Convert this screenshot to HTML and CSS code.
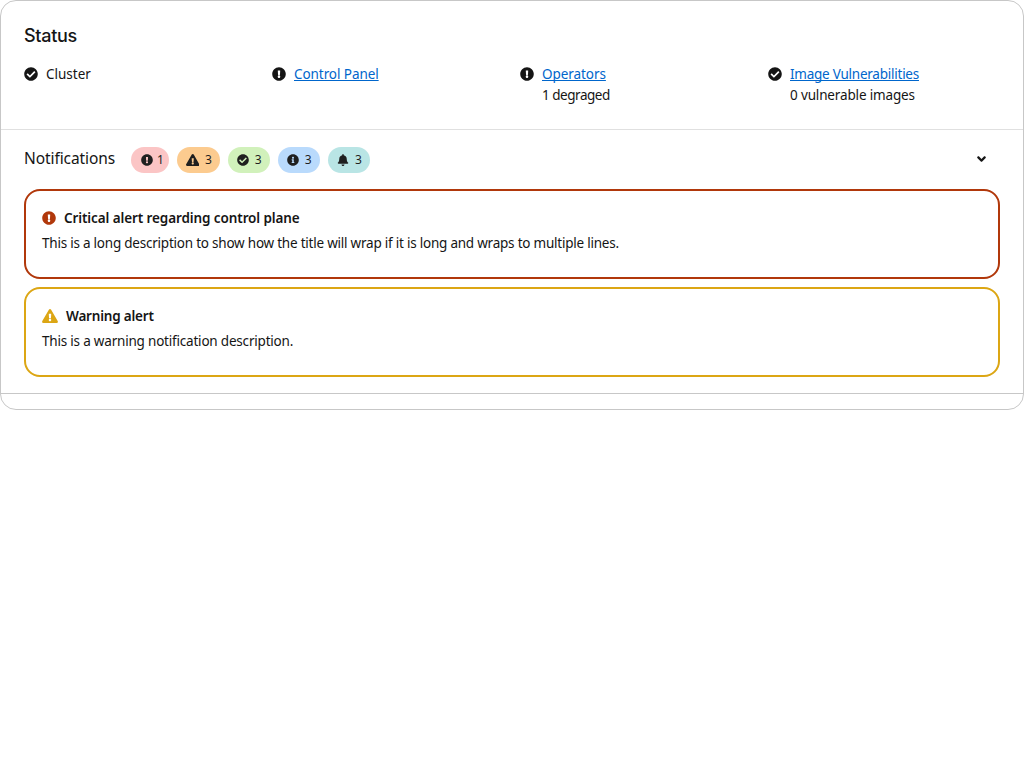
FILE: index.html
```html
<!DOCTYPE html>
<html lang="en">
<head>
<meta charset="utf-8">
<title>Status</title>
<link rel="stylesheet" href="styles.css">
</head>
<body>
<svg class="sprite" aria-hidden="true">
  <symbol id="check" viewBox="0 0 512 512"><path d="M504 256c0 136.967-111.033 248-248 248S8 392.967 8 256 119.033 8 256 8s248 111.033 248 248zM227.314 387.314l184-184c6.248-6.248 6.248-16.379 0-22.627l-22.627-22.627c-6.248-6.249-16.379-6.249-22.628 0L216 308.118l-70.059-70.059c-6.248-6.248-16.379-6.248-22.628 0l-22.627 22.627c-6.248 6.248-6.248 16.379 0 22.627l104 104c6.249 6.249 16.379 6.249 22.628.001z"/></symbol>
  <symbol id="exclamation" viewBox="0 0 512 512"><path d="M504 256c0 136.997-111.043 248-248 248S8 392.997 8 256C8 119.083 119.043 8 256 8s248 111.083 248 248zm-248 50c-25.405 0-46 20.595-46 46s20.595 46 46 46 46-20.595 46-46-20.595-46-46-46zm-43.673-165.346l7.418 136c.347 6.364 5.609 11.346 11.982 11.346h48.546c6.373 0 11.635-4.982 11.982-11.346l7.418-136c.375-6.874-5.098-12.654-11.982-12.654h-63.383c-6.884 0-12.356 5.78-11.981 12.654z"/></symbol>
  <symbol id="triangle" viewBox="0 0 576 512"><path d="M569.517 440.013C587.975 472.007 564.806 512 527.94 512H48.054c-36.937 0-59.999-40.055-41.577-71.987L246.423 23.985c18.467-32.009 64.72-31.951 83.154 0l239.94 416.028zM288 354c-25.405 0-46 20.595-46 46s20.595 46 46 46 46-20.595 46-46-20.595-46-46-46zm-43.673-165.346l7.418 136c.347 6.364 5.609 11.346 11.982 11.346h48.546c6.373 0 11.635-4.982 11.982-11.346l7.418-136c.375-6.874-5.098-12.654-11.982-12.654h-63.383c-6.884 0-12.356 5.78-11.981 12.654z"/></symbol>
  <symbol id="info" viewBox="0 0 512 512"><path d="M256 8C119.043 8 8 119.083 8 256c0 136.997 111.043 248 248 248s248-111.003 248-248C504 119.083 392.957 8 256 8zm0 110c23.196 0 42 18.804 42 42s-18.804 42-42 42-42-18.804-42-42 18.804-42 42-42zm56 254c0 6.627-5.373 12-12 12h-88c-6.627 0-12-5.373-12-12v-24c0-6.627 5.373-12 12-12h12v-64h-12c-6.627 0-12-5.373-12-12v-24c0-6.627 5.373-12 12-12h64c6.627 0 12 5.373 12 12v100h12c6.627 0 12 5.373 12 12v24z"/></symbol>
  <symbol id="bell" viewBox="0 0 448 512"><path d="M224 512c35.32 0 63.97-28.65 63.97-64H160.03c0 35.35 28.65 64 63.97 64zm215.39-149.71c-19.32-20.76-55.47-51.99-55.47-154.29 0-77.7-54.48-139.9-127.94-155.16V32c0-17.67-14.32-32-31.98-32s-31.98 14.33-31.98 32v20.84C118.56 68.1 64.08 130.3 64.08 208c0 102.3-36.15 133.53-55.47 154.29-6 6.45-8.66 14.16-8.61 21.71.11 16.4 12.98 32 32.1 32h383.8c19.12 0 32-15.6 32.1-32 .05-7.55-2.61-15.27-8.61-21.71z"/></symbol>
  <symbol id="angle" viewBox="0 0 320 512"><path d="M143 352.3L7 216.3c-9.4-9.4-9.4-24.6 0-33.9l22.6-22.6c9.4-9.4 24.6-9.4 33.9 0l96.4 96.4 96.4-96.4c9.4-9.4 24.6-9.4 33.9 0l22.6 22.6c9.4 9.4 9.4 24.6 0 33.9l-136 136c-9.2 9.4-24.4 9.4-33.8 0z"/></symbol>
</svg>
<main class="card">
  <section class="status">
    <h2 class="status-title"><span class="t-status">Status</span></h2>
    <div class="status-grid">
      <div class="status-item"><svg class="icon"><use href="#check"/></svg><div class="status-text"><span class="t-cluster">Cluster</span></div></div>
      <div class="status-item"><svg class="icon"><use href="#exclamation"/></svg><div class="status-text"><a class="t-control" href="#">Control Panel</a></div></div>
      <div class="status-item"><svg class="icon"><use href="#exclamation"/></svg><div class="status-text"><a class="t-operators" href="#">Operators</a><br><span class="t-degraged">1 degraged</span></div></div>
      <div class="status-item"><svg class="icon"><use href="#check"/></svg><div class="status-text"><a class="t-image" href="#">Image Vulnerabilities</a><br><span class="t-vulnerable">0 vulnerable images</span></div></div>
    </div>
  </section>
  <section class="notifications">
    <header class="notif-header">
      <span class="notif-title">Notifications</span>
      <div class="labels">
        <span class="label red"><svg class="icon-sm"><use href="#exclamation"/></svg><span class="one">1</span></span>
        <span class="label orange"><svg class="icon-sm wide"><use href="#triangle"/></svg>3</span>
        <span class="label green"><svg class="icon-sm"><use href="#check"/></svg>3</span>
        <span class="label blue"><svg class="icon-sm"><use href="#info"/></svg>3</span>
        <span class="label teal"><svg class="icon-sm"><use href="#bell"/></svg>3</span>
      </div>
      <svg class="toggle"><use href="#angle"/></svg>
    </header>
    <div class="alerts">
      <article class="alert danger">
        <h3 class="alert-title"><svg class="icon"><use href="#exclamation"/></svg><span class="t-critical">Critical alert regarding control plane</span></h3>
        <p class="alert-text t-long">This is a long description to show how the title will wrap if it is long and wraps to multiple lines.</p>
      </article>
      <article class="alert warning">
        <h3 class="alert-title"><svg class="icon icon-wide"><use href="#triangle"/></svg><span class="t-warning">Warning alert</span></h3>
        <p class="alert-text t-short">This is a warning notification description.</p>
      </article>
    </div>
  </section>
</main>
</body>
</html>
```

FILE: styles.css
```css
* { box-sizing: border-box; }
body {
  margin: 0;
  background: #fff;
  color: #151515;
  font-family: "Noto Sans", "Open Sans", sans-serif;
  font-size: 13.5px;
  line-height: 21px;
}
.sprite { display: none; }
.card {
  height: 410px;
  border: 1px solid #c7c7c7;
  border-radius: 16px;
  white-space: nowrap;
}
.status { height: 129px; padding: 23px 23px 0; border-bottom: 1px solid #e0e0e0; }
.status-title { margin: 0 0 16px; font-family: Inter, sans-serif; font-size: 18px; line-height: 23px; font-weight: 500; }
.status-grid { display: grid; grid-template-columns: repeat(4, 1fr); gap: 16px; }
.status-item { display: flex; gap: 8px; }
.status-text { padding-top: 1px; }
.icon { display: block; flex: none; width: 14px; height: 14px; margin-top: 3.5px; fill: currentColor; }
.icon-wide { width: 16px; }
a { color: #0066cc; text-decoration: underline; text-underline-offset: 1px; text-decoration-thickness: 1px; text-decoration-skip-ink: none; }

.t-status { letter-spacing: -0.3px; }
.t-control { letter-spacing: -0.07px; }
.t-operators { letter-spacing: -0.06px; }
.t-degraged { letter-spacing: -0.48px; }
.t-image { letter-spacing: -0.24px; }
.t-vulnerable { letter-spacing: -0.15px; }
.t-critical { letter-spacing: -0.1px; }
.t-warning { letter-spacing: -0.2px; }
.t-long { letter-spacing: -0.225px; }
.t-short { letter-spacing: -0.2px; }

.notifications { height: 264px; padding: 17px 23px 0; border-bottom: 1px solid #c7c7c7; }
.notif-header { display: flex; height: 26px; }
.notif-title { width: 107px; font-size: 15.5px; line-height: 23px; letter-spacing: -0.08px; }
.labels { display: flex; gap: 8px; }
.label {
  display: flex;
  align-items: center;
  gap: 5.7px;
  width: 42.15px;
  height: 26px;
  padding-left: 9.5px;
  border-radius: 13px;
  color: #1f1f1f;
  font-size: 12px;
  line-height: 18px;
}
.icon-sm { width: 12px; height: 12px; flex: none; fill: #1f1f1f; }
.wide { width: 13.5px; }
.red { width: 38.4px; gap: 4.5px; background: #fbc5c5; }
.orange { background: #fccb8f; padding-left: 8.5px; }
.green { background: #d1f1bb; }
.blue { background: #b9dafc; }
.teal { background: #b9e5e5; }
.toggle { width: 9px; height: 14px; margin: 5px 14px 0 auto; fill: currentColor; }

.alerts { display: grid; gap: 8px; margin-top: 16px; }
.alert { height: 90px; padding: 16px; border: 2px solid; border-radius: 16px; }
.danger { border-color: #b1380b; }
.warning { border-color: #dca614; }
.alert-title { display: flex; gap: 8px; margin: 0 0 4px; font-size: 13.5px; line-height: 21px; font-weight: 600; }
.alert-title span { padding-top: 1px; }
.danger .icon { fill: #b1380b; }
.warning .icon { fill: #dca614; }
.alert-text { margin: 0; }
```
